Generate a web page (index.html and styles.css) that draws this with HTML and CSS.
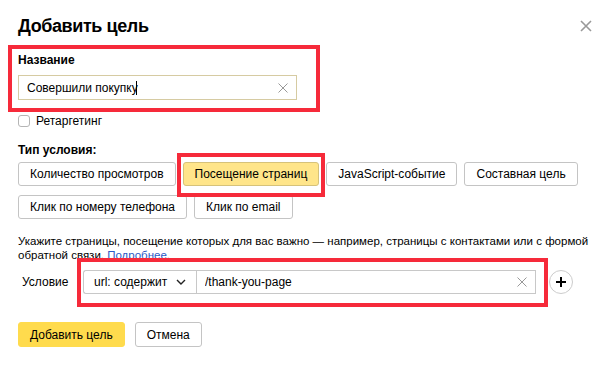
FILE: index.html
```html
<!DOCTYPE html>
<html lang="ru">
<head>
    <meta charset="UTF-8">
    <title>Добавить цель</title>
    <link rel="stylesheet" href="styles.css">
</head>
<body>
    <div class="dialog">
        <div class="dialog-header">
            <h1 class="dialog-title">Добавить цель</h1>
            <button class="close-button" aria-label="Закрыть">
                <svg width="12" height="12" viewBox="0 0 12 12"><path d="M1 1L11 11M11 1L1 11" stroke="#999" stroke-width="1.6" fill="none"/></svg>
            </button>
        </div>

        <div class="name-group marked">
            <label class="field-label" for="goal-name">Название</label>
            <div class="text-input focused">
                <input type="text" id="goal-name" value="Совершили покупку">
                <span class="caret"></span>
                <span class="clear-icon">
                    <svg width="10" height="10" viewBox="0 0 10 10"><path d="M0.5 0.5L9.5 9.5M9.5 0.5L0.5 9.5" stroke="#999" stroke-width="1" fill="none"/></svg>
                </span>
            </div>
        </div>

        <label class="checkbox-row">
            <span class="checkbox"></span>
            <span>Ретаргетинг</span>
        </label>

        <div class="field-label type-label">Тип условия:</div>
        <div class="type-buttons">
            <button class="btn">Количество просмотров</button>
            <button class="btn btn-selected">Посещение страниц</button>
            <button class="btn">JavaScript-событие</button>
            <button class="btn">Составная цель</button>
            <button class="btn">Клик по номеру телефона</button>
            <button class="btn">Клик по email</button>
        </div>

        <p class="hint">Укажите страницы, посещение которых для вас важно — например, страницы с контактами или с формой обратной связи. <a href="#">Подробнее</a>.</p>

        <div class="condition-row">
            <span class="condition-label">Условие</span>
            <div class="condition-control">
                <div class="select">
                    <span>url: содержит</span>
                    <svg width="10" height="6" viewBox="0 0 10 6"><path d="M1 1L5 5L9 1" stroke="#222" stroke-width="1.4" fill="none"/></svg>
                </div>
                <div class="text-input url-input">
                    <input type="text" value="/thank-you-page">
                    <span class="clear-icon">
                        <svg width="10" height="10" viewBox="0 0 10 10"><path d="M0.5 0.5L9.5 9.5M9.5 0.5L0.5 9.5" stroke="#999" stroke-width="1" fill="none"/></svg>
                    </span>
                </div>
            </div>
            <button class="add-button" aria-label="Добавить условие">
                <svg width="12" height="12" viewBox="0 0 12 12"><path d="M6 1V11M1 6H11" stroke="#000" stroke-width="2" fill="none"/></svg>
            </button>
        </div>

        <div class="footer">
            <button class="btn btn-action">Добавить цель</button>
            <button class="btn">Отмена</button>
        </div>
    </div>
</body>
</html>
```

FILE: styles.css
```css
*{
    margin: 0px;
    padding: 0px;
    box-sizing: border-box;
}

body{
    font-family: "Liberation Sans", Arial, Helvetica, sans-serif;
    font-size: 12px;
    color: #000;
    background-color: #FFF;
}

button{
    font-family: inherit;
    font-size: 12px;
    color: #000;
    background: none;
    border: 0px;
    cursor: pointer;
}

.dialog{
    padding: 14px 18px 0px 18px;
}

.dialog-header{
    display: flex;
    justify-content: space-between;
    align-items: center;
}

.dialog-title{
    font-size: 18px;
    line-height: 24px;
    font-weight: bold;
    letter-spacing: -0.4px;
}

.close-button{
    width: 12px;
    height: 12px;
    display: flex;
}

.marked{
    border: 4px solid #F62A3A;
}

.name-group{
    margin: 7px 0px 0px -10px;
    width: 312px;
    padding: 3px 19px 8px 6px;
}

.field-label{
    display: block;
    font-weight: bold;
    line-height: 16px;
}

.text-input{
    position: relative;
    display: flex;
    align-items: center;
    height: 25px;
    border: 1px solid #C8C8C8;
    background-color: #FFF;
}

.text-input.focused{
    border-color: #D6CBA2;
}

.name-group .text-input{
    margin-top: 7px;
}

.text-input input{
    flex: 1;
    min-width: 0px;
    height: 100%;
    border: 0px;
    outline: none;
    padding: 0px 8px;
    font-family: inherit;
    font-size: 12px;
    color: #000;
    background: none;
}

.caret{
    position: absolute;
    left: 117px;
    top: 5px;
    width: 1px;
    height: 14px;
    background-color: #000;
}

.clear-icon{
    display: flex;
    padding: 0px 8px;
}

.checkbox-row{
    display: flex;
    align-items: center;
    gap: 6px;
    margin-top: 1px;
    height: 16px;
}

.checkbox{
    width: 12px;
    height: 12px;
    border: 1px solid #B5B5B5;
    border-radius: 3px;
}

.type-label{
    margin-top: 13px;
}

.type-buttons{
    display: flex;
    flex-wrap: wrap;
    gap: 9px 7px;
    margin-top: 4px;
    width: 574px;
}

.btn{
    height: 24px;
    padding: 0px 11px;
    border: 1px solid #C4C4C4;
    border-radius: 3px;
    background-color: #FFF;
    white-space: nowrap;
}

.btn-selected{
    position: relative;
    background-color: #FFE58A;
    border-color: #D6C27A;
}

.btn-selected::after{
    content: "";
    position: absolute;
    top: -10px;
    bottom: -12px;
    left: -7px;
    right: -7px;
    border: 4px solid #F62A3A;
    pointer-events: none;
}

.hint{
    margin-top: 15px;
    font-size: 11.5px;
    line-height: 14px;
}

.hint a{
    color: #2A5BC7;
    text-decoration: none;
}

.condition-row{
    display: flex;
    align-items: center;
    margin-top: 8px;
}

.condition-label{
    width: 65px;
    padding-left: 4px;
}

.condition-control{
    position: relative;
    display: flex;
    width: 453px;
}

.condition-control::after{
    content: "";
    position: absolute;
    top: -12px;
    bottom: -13px;
    left: -6px;
    right: -12px;
    border: 4px solid #F62A3A;
    pointer-events: none;
}

.select{
    display: flex;
    align-items: center;
    justify-content: space-between;
    width: 113px;
    height: 24px;
    padding: 0px 10px;
    border: 1px solid #C8C8C8;
    border-right: 0px;
    border-radius: 3px 0px 0px 3px;
}

.url-input{
    flex: 1;
    height: 24px;
}

.add-button{
    width: 24px;
    height: 24px;
    margin-left: 13px;
    border: 1px solid #CCC;
    border-radius: 50%;
    display: flex;
    align-items: center;
    justify-content: center;
}

.footer{
    display: flex;
    gap: 10px;
    margin-top: 28px;
}

.btn-action{
    background-color: #FFDB4D;
    border-color: #FFDB4D;
}

.footer .btn{
    height: 25px;
}
```
